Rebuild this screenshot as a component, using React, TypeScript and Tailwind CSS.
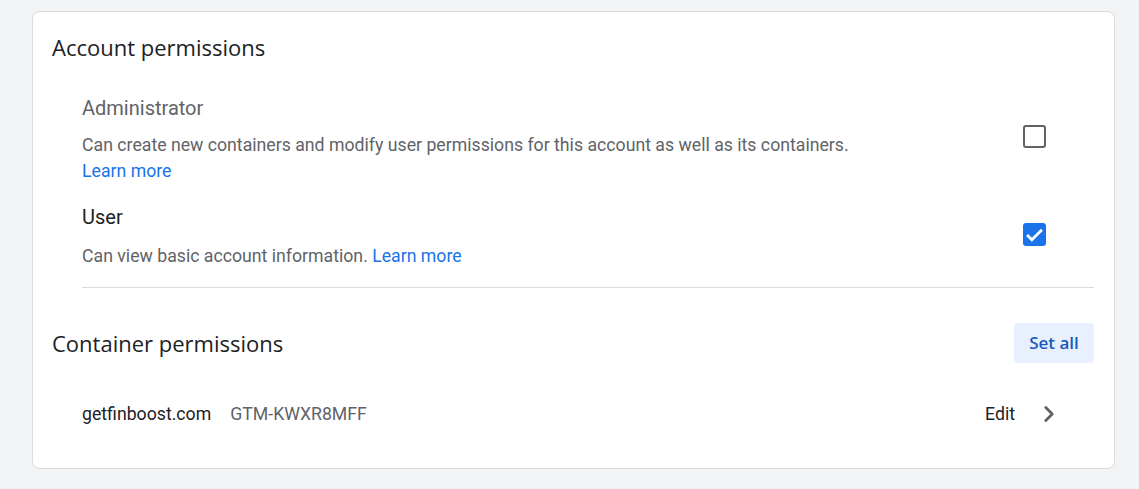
import { ChevronRight } from 'lucide-react'

const sans = { fontFamily: 'Roboto, "Liberation Sans", sans-serif' }
const display = { fontFamily: '"Open Sans", Roboto, sans-serif' }

function Checkbox({ checked }: { checked: boolean }) {
  if (checked) {
    return (
      <div className="w-[23px] h-[23px] rounded-[3px] bg-[#1a73e8] flex items-center justify-center">
        <svg width="21" height="21" viewBox="0 0 24 24" fill="none">
          <path d="M3.5 12.5l5.5 5.5L20.5 6.5" stroke="white" strokeWidth="3.2" />
        </svg>
      </div>
    )
  }
  return <div className="w-[23px] h-[23px] rounded-[3px] border-2 border-[#5f6368]" />
}

export default function App() {
  return (
    <div className="min-h-screen bg-[#f1f3f4] pt-[11px] pl-[32px] pr-[24px]" style={sans}>
      <div className="bg-white border border-[#dadce0] rounded-[8px] h-[458px] pt-[21px] pl-[19px] pr-[20px]">
        <h2 className="text-[22px] leading-[28px] text-[#202124]" style={display}>
          Account permissions
        </h2>

        <div className="pl-[30px] mt-[35px]">
          <div className="flex items-start">
            <div className="flex-1">
              <div className="text-[20px] leading-[24px] text-[#5f6368]">Administrator</div>
              <p className="mt-[12px] text-[17.7px] leading-[26px] text-[#5f6368]">
                Can create new containers and modify user permissions for this account as well as its containers.
                <br />
                <a className="text-[#1a73e8]">Learn more</a>
              </p>
            </div>
            <div className="w-[71px] mt-[29px]">
              <Checkbox checked={false} />
            </div>
          </div>

          <div className="flex items-start mt-[21px]">
            <div className="flex-1">
              <div className="text-[20px] leading-[24px] text-[#202124]">User</div>
              <p className="mt-[14px] text-[17.7px] leading-[26px] text-[#5f6368]">
                Can view basic account information. <a className="text-[#1a73e8]">Learn more</a>
              </p>
            </div>
            <div className="w-[71px] mt-[18px]">
              <Checkbox checked={true} />
            </div>
          </div>

          <div className="h-px bg-[#dadce0] mt-[18px]" />
        </div>

        <div className="flex items-center justify-between mt-[35px]">
          <h2 className="text-[22px] leading-[28px] text-[#202124]" style={display}>
            Container permissions
          </h2>
          <button className="w-[80px] h-[40px] rounded-[4px] bg-[#e8f0fe] text-[#185abc] text-[17px] font-semibold" style={display}>
            Set all
          </button>
        </div>

        <div className="flex items-center pl-[30px] mt-[38px] text-[17.7px]">
          <span className="text-[#202124]">getfinboost.com</span>
          <span className="ml-[19px] text-[#5f6368]">GTM-KWXR8MFF</span>
          <span className="ml-auto text-[#202124]">Edit</span>
          <ChevronRight className="ml-[21px] mr-[32px] text-[#5f6368]" size={26} strokeWidth={2.6} />
        </div>
      </div>
    </div>
  )
}
